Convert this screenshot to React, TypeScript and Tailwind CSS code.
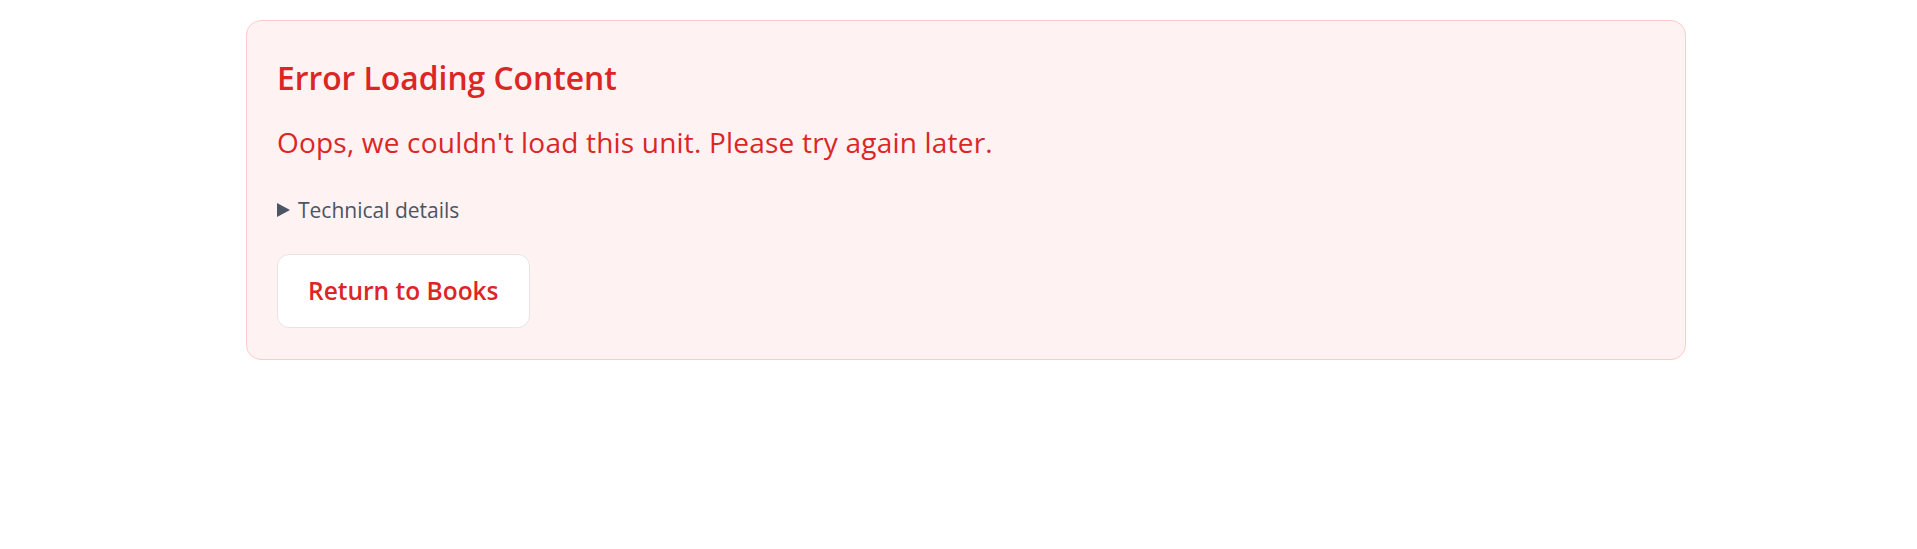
import React from "react";

export default function App() {
  return (
    <div className="min-h-[549px] w-full bg-white pt-[20px] font-['Open_Sans',sans-serif]">
      <div className="ml-[246px] w-[1440px] rounded-[15px] border border-[#fecaca] bg-[#fef2f2] px-[30px] pb-[31px] pt-[37px]">
        <h2 className="text-[31.8px] font-semibold leading-[40px] text-[#dc2626]">
          Error Loading Content
        </h2>
        <p className="mt-[26px] text-[28px] leading-[36px] tracking-[0.2px] text-[#dc2626]">
          Oops, we couldn't load this unit. Please try again later.
        </p>
        <details className="mt-[36px]">
          <summary className="flex cursor-pointer list-none items-center text-[21px] leading-[28px] text-[#4b5563]">
            <svg width="13" height="14" viewBox="0 0 13 14" className="mr-[8px] shrink-0">
              <polygon points="0,0 13,7 0,14" fill="#4b5563" />
            </svg>
            Technical details
          </summary>
        </details>
        <button className="mt-[30px] flex h-[74px] items-center rounded-[12px] border border-[#e8e4e4] bg-white px-[30px] text-[24.5px] font-semibold leading-[32px] text-[#dc2626]">
          Return to Books
        </button>
      </div>
    </div>
  );
}
